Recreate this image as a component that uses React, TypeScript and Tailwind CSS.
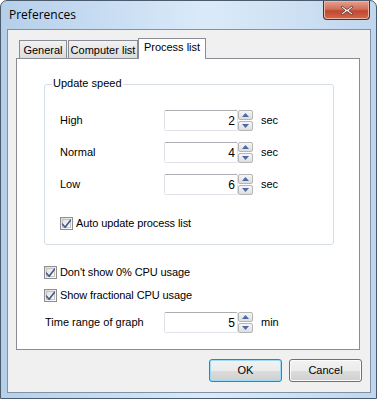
import React from "react";

const Check = () => (
  <span className="relative flex h-[13px] w-[13px] shrink-0 items-center justify-center border border-[#8f8f8f] bg-[linear-gradient(135deg,#dcdcdc,#ffffff)]">
    <span className="absolute inset-[1px] border border-[#c4c4c4] bg-[linear-gradient(135deg,#e2e2e2,#fbfbfb)]" />
    <svg width="11" height="11" viewBox="0 0 11 11" className="relative">
      <path d="M1.5 5.5 L4 8.5 L9.5 1.5 L9.5 3 L4.2 10 L1.5 7 Z" fill="#3d5a98" stroke="#2a3f73" strokeWidth="0.6" />
    </svg>
  </span>
);

const CheckRow = ({ label, className = "" }: { label: string; className?: string }) => (
  <div className={"flex h-[13px] items-center gap-[3px] " + className}>
    <Check />
    <span className="leading-none tracking-[-0.1px]">{label}</span>
  </div>
);

const Spin = () => (
  <div className="flex h-[21px] w-[15px] flex-col gap-[1px]">
    {[0, 1].map((i) => (
      <div
        key={i}
        className="flex flex-1 items-center justify-center rounded-[2px] border border-[#b5b5b5] bg-[linear-gradient(#f6f6f6,#dedede)]"
      >
        <svg width="7" height="4" viewBox="0 0 7 4">
          {i === 0 ? (
            <path d="M0 4 L3.5 0 L7 4 Z" fill="#4e6aa6" />
          ) : (
            <path d="M0 0 L3.5 4 L7 0 Z" fill="#4e6aa6" />
          )}
        </svg>
      </div>
    ))}
  </div>
);

const NumberField = ({ value, unit }: { value: string; unit: string }) => (
  <div className="flex items-center">
    <div className="flex h-[21px] w-[74px] items-center justify-end rounded-[2px] border border-[#dfe3e9] border-t-[#abadb3] bg-white pr-[2px] text-[12px]">
      {value}
    </div>
    <Spin />
    <span className="ml-[8px]">{unit}</span>
  </div>
);

const SpeedRow = ({ label, value }: { label: string; value: string }) => (
  <div className="flex h-[21px] items-center">
    <span className="w-[104px]">{label}</span>
    <NumberField value={value} unit="sec" />
  </div>
);

const Button = ({ children, primary }: { children: React.ReactNode; primary?: boolean }) => (
  <button
    className={
      "flex h-[23px] w-[73px] items-center justify-center rounded-[3px] border " +
      (primary
        ? "border-[#3c7fb1] bg-[linear-gradient(#f2f2f2_0%,#ebebeb_50%,#dddddd_51%,#cfcfcf_100%)] shadow-[inset_0_0_0_1px_#9ddcf7]"
        : "border-[#707070] bg-[linear-gradient(#f2f2f2_0%,#ebebeb_50%,#dddddd_51%,#cfcfcf_100%)] shadow-[inset_0_0_0_1px_#fcfcfc]")
    }
  >
    {children}
  </button>
);

const Tab = ({ label, width, selected }: { label: string; width: string; selected?: boolean }) => (
  <div
    className={
      "flex items-center justify-center whitespace-nowrap border border-b-0 border-[#898c95] text-[11px] " +
      width +
      (selected
        ? " relative z-10 -mb-[1px] h-[21px] bg-white pb-[3px]"
        : " h-[18px] bg-[linear-gradient(#f2f2f2,#dcdcdc)] pt-[1px]")
    }
  >
    {label}
  </div>
);

export default function App() {
  return (
    <div className="h-[399px] w-[377px] overflow-hidden bg-white font-['Liberation_Sans',Arial,sans-serif] text-[11px] text-black">
      <div className="flex h-full w-full flex-col rounded-t-[7px] border border-[#4b5b6e] bg-[linear-gradient(90deg,#b6cfe9_0%,#c9def3_30%,#dbeaf8_55%,#cde0f3_80%,#bfd6ee_100%)]">
        {/* title bar */}
        <div className="flex h-[28px] items-start justify-between pl-[8px] pr-[6px]">
          <span className="mt-[8px] font-['Open_Sans',sans-serif] text-[12px] leading-none">Preferences</span>
          <div className="flex h-[19px] w-[47px] items-center justify-center rounded-b-[4px] border border-t-0 border-[#5b2a22] bg-[linear-gradient(#e8a08e_0%,#d0705a_45%,#c14730_55%,#d26a4b_100%)] shadow-[inset_0_0_0_1px_#eeb3a3]">
            <svg width="14" height="11" viewBox="0 0 14 11">
              <path
                d="M2 1 L7 4.6 L12 1 L13 2.2 L8.8 5.5 L13 8.8 L12 10 L7 6.4 L2 10 L1 8.8 L5.2 5.5 L1 2.2 Z"
                fill="#ffffff"
                stroke="#55302a"
                strokeWidth="0.8"
              />
            </svg>
          </div>
        </div>

        {/* client */}
        <div className="mb-[5px] ml-[6px] mr-[5px] flex flex-1 flex-col border border-[#8192a8] bg-[#f0f0f0]">
          {/* tabs */}
          <div className="mt-[8px] flex h-[20px] items-end pl-[11px]">
            <Tab label="General" width="w-[48px]" />
            <div className="w-[1px]" />
            <Tab label="Computer list" width="w-[70px]" />
            <Tab label="Process list" width="w-[68px]" selected />
          </div>

          {/* panel */}
          <div className="ml-[8px] flex h-[292px] w-[344px] flex-col border border-[#898c95] bg-white">
            <div className="relative ml-[27px] mt-[25px] flex w-[290px] flex-col rounded-[3px] border border-[#d5dfe5] pb-[14px] pl-[15px] pt-[25px]">
              <span className="absolute left-[7px] top-[-7px] bg-white px-[1px] leading-none">Update speed</span>
              <div className="flex flex-col gap-[11px]">
                <SpeedRow label="High" value="2" />
                <SpeedRow label="Normal" value="4" />
                <SpeedRow label="Low" value="6" />
              </div>
              <CheckRow label="Auto update process list" className="mt-[22px]" />
            </div>

            <CheckRow label="Don't show 0% CPU usage" className="ml-[27px] mt-[21px]" />
            <CheckRow label="Show fractional CPU usage" className="ml-[27px] mt-[10px]" />

            <div className="ml-[27px] mt-[10px] flex h-[21px] items-center">
              <span className="w-[120px] pl-[1px]">Time range of graph</span>
              <NumberField value="5" unit="min" />
            </div>
          </div>

          {/* buttons */}
          <div className="mr-[8px] mt-[9px] flex justify-end gap-[7px]">
            <Button primary>OK</Button>
            <Button>Cancel</Button>
          </div>
        </div>
      </div>
    </div>
  );
}
